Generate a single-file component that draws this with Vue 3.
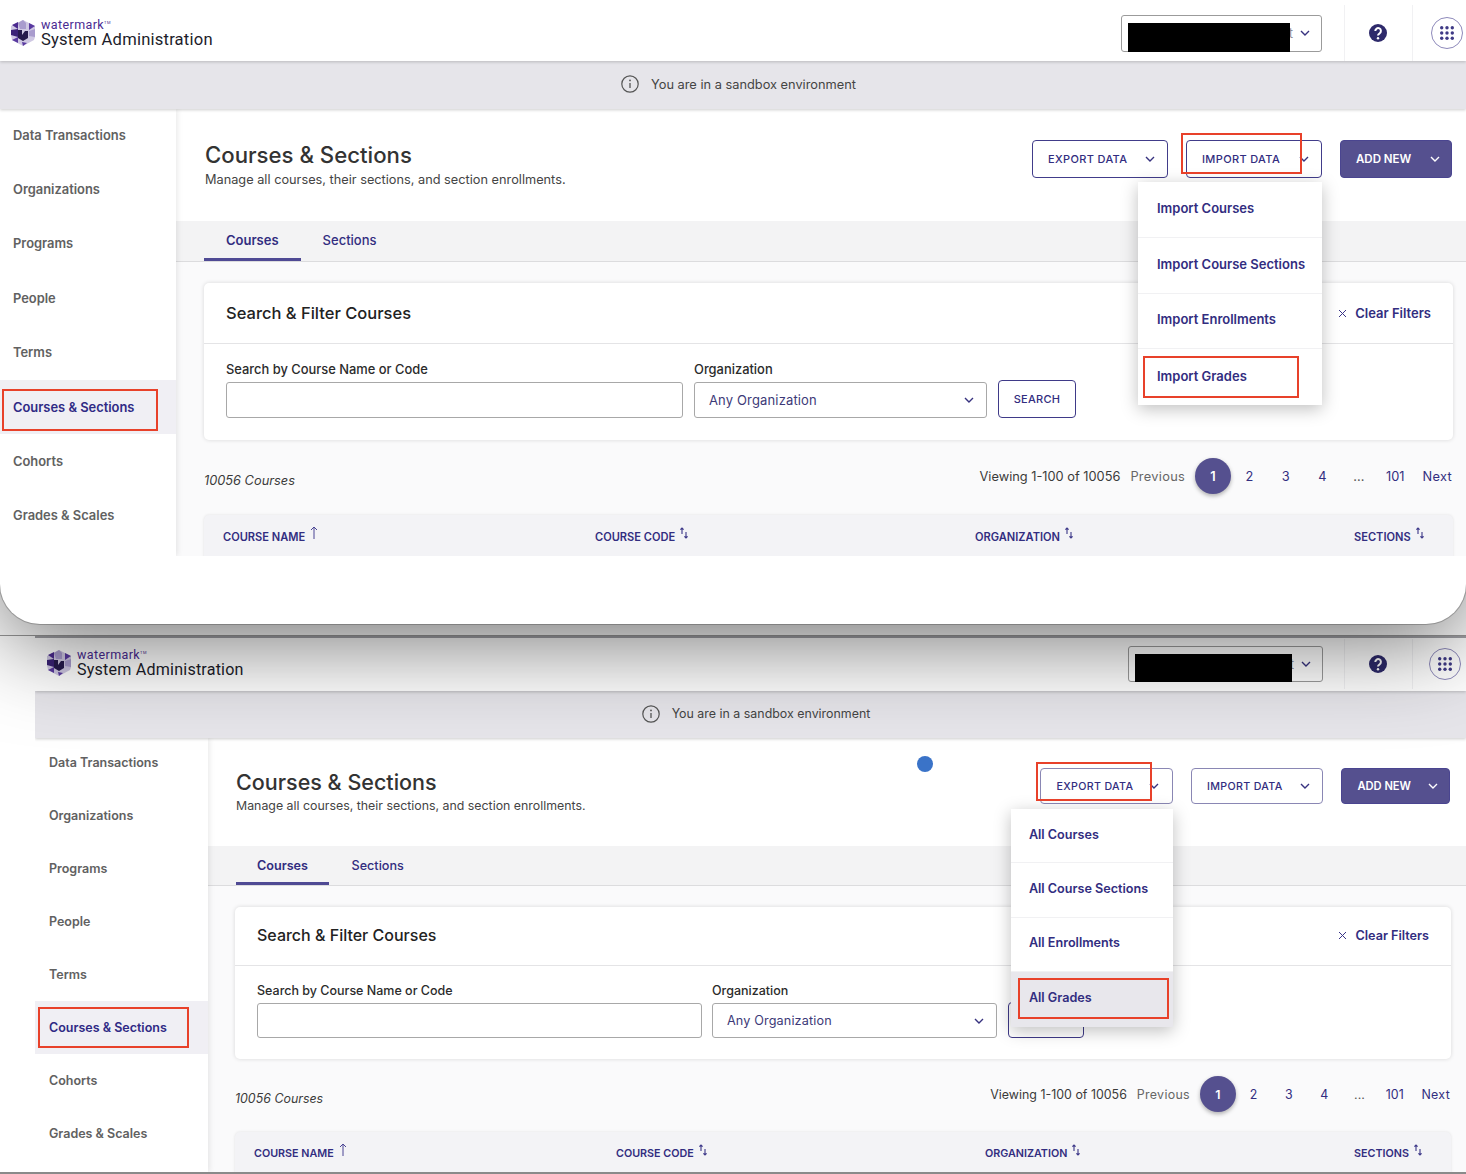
<script setup>
// Two captures of the same page, stacked. Only the open menu and some sizes differ.
const navItems = ['Data Transactions', 'Organizations', 'Programs', 'People', 'Terms', 'Courses & Sections', 'Cohorts', 'Grades & Scales'];
const pages = ['2', '3', '4', '...', '101'];
const columns = ['COURSE NAME', 'COURSE CODE', 'ORGANIZATION', 'SECTIONS'];

const shots = [
  {
    id: 'top',
    openButton: 'IMPORT DATA',
    menu: ['Import Courses', 'Import Course Sections', 'Import Enrollments', 'Import Grades'],
    cursor: false
  },
  {
    id: 'bottom',
    openButton: 'EXPORT DATA',
    menu: ['All Courses', 'All Course Sections', 'All Enrollments', 'All Grades'],
    cursor: true
  }
];
</script>

<template>
  <div class="page">
    <div v-for="shot in shots" :key="shot.id" class="frame" :class="shot.id">
      <div class="shot">
        <header class="topbar">
          <div class="brand">
            <svg class="logo" viewBox="0 0 24 26">
              <polygon points="12,0 18,3 24,6 24,17 23,20 12,26 1,20 0,15 0,6" fill="#cfc8e3" />
              <polygon points="7,3 12,0 15,3 15,9 9,9" fill="#a99cce" />
              <polygon points="1,5 7,2 7,9" fill="#4b2a8f" />
              <polygon points="0,10 7,9 7,17 0,15" fill="#3a2277" />
              <polygon points="18,3 24,6 18,10" fill="#5a3aa0" />
              <polygon points="18,11 24,9 24,17 18,16" fill="#a99cce" />
              <polygon points="1,20 7,17 7,23" fill="#5a3aa0" />
              <polygon points="11,22 16,23 12,26" fill="#5a3aa0" />
              <polygon points="7,10 11,10 11,15 14,11 17,11 17,18 12,21 7,18" fill="#261a4d" />
            </svg>
            <div class="brand-text">
              <span class="wordmark">watermark<sup>TM</sup></span>
              <span class="product">System Administration</span>
            </div>
          </div>
          <div class="account">
            <span class="account-name">t</span>
            <svg class="chev" viewBox="0 0 10 6"><path d="M1 1l4 4 4-4" /></svg>
            <div class="redact"></div>
          </div>
          <div class="bar-cell help">
            <svg width="18" height="18" viewBox="0 0 18 18">
              <circle cx="9" cy="9" r="9" fill="#2e2a6b" />
              <path d="M6.3 7a2.8 2.8 0 1 1 4.3 2.3c-1 .6-1.6 1.1-1.6 2.3" fill="none" stroke="#fff" stroke-width="2" />
              <circle cx="9" cy="14.2" r="1.2" fill="#fff" />
            </svg>
          </div>
          <div class="bar-cell apps">
            <div class="apps-ring">
              <svg width="14" height="14" viewBox="0 0 14 14" fill="#3f3a86">
                <template v-for="y in [1.7, 7, 12.3]" :key="y">
                  <circle v-for="x in [1.7, 7, 12.3]" :key="x" :cx="x" :cy="y" r="1.7" />
                </template>
              </svg>
            </div>
          </div>
        </header>

        <div class="notice">
          <svg width="18" height="18" viewBox="0 0 18 18">
            <circle cx="9" cy="9" r="8.2" fill="none" stroke="#555" stroke-width="1.2" />
            <path d="M9 8v5" stroke="#555" stroke-width="1.3" />
            <circle cx="9" cy="5.4" r=".9" fill="#555" />
          </svg>
          <span>You are in a sandbox environment</span>
        </div>

        <div class="body">
          <nav class="side">
            <div v-for="item in navItems" :key="item" class="nav-item" :class="{ active: item === 'Courses & Sections' }">
              {{ item }}
              <div v-if="item === 'Courses & Sections'" class="mark mark-nav"></div>
            </div>
          </nav>

          <main class="main">
            <div v-if="shot.cursor" class="cursor"></div>
            <div class="head">
              <div class="head-text">
                <h1>Courses &amp; Sections</h1>
                <p>Manage all courses, their sections, and section enrollments.</p>
              </div>
              <div class="actions">
                <div v-for="label in ['EXPORT DATA', 'IMPORT DATA', 'ADD NEW']" :key="label" class="action" :class="{ primary: label === 'ADD NEW' }">
                  <span>{{ label }}</span>
                  <svg class="chev" viewBox="0 0 10 6"><path d="M1 1l4 4 4-4" /></svg>
                  <template v-if="label === shot.openButton">
                    <div class="mark mark-button"></div>
                    <div class="menu">
                      <div v-for="(entry, i) in shot.menu" :key="entry" class="menu-item" :class="{ last: i === 3 }">
                        {{ entry }}
                        <div v-if="i === 3" class="mark mark-menu"></div>
                      </div>
                    </div>
                  </template>
                </div>
              </div>
            </div>

            <div class="tabs">
              <div class="tab current">Courses</div>
              <div class="tab">Sections</div>
            </div>

            <div class="content">
              <section class="card">
                <div class="card-head">
                  <h2>Search &amp; Filter Courses</h2>
                  <div class="clear">
                    <svg width="9" height="9" viewBox="0 0 9 9"><path d="M1 1l7 7M8 1l-7 7" stroke="#3a3587" fill="none" /></svg>
                    <span>Clear Filters</span>
                  </div>
                </div>
                <div class="filters">
                  <div class="field field-name">
                    <label>Search by Course Name or Code</label>
                    <div class="input"></div>
                  </div>
                  <div class="field field-org">
                    <label>Organization</label>
                    <div class="input select">
                      <span>Any Organization</span>
                      <svg class="chev" viewBox="0 0 10 6"><path d="M1 1l4 4 4-4" /></svg>
                    </div>
                  </div>
                  <div class="search">SEARCH</div>
                </div>
              </section>

              <div class="results">
                <span class="count">10056 Courses</span>
                <div class="pager">
                  <span class="viewing">Viewing 1-100 of 10056</span>
                  <span class="prev">Previous</span>
                  <span class="page-current">1</span>
                  <span v-for="p in pages" :key="p" class="page-cell" :class="{ dots: p === '...' }">{{ p }}</span>
                  <span class="next">Next</span>
                </div>
              </div>

              <div class="table-head">
                <div v-for="(col, i) in columns" :key="col" class="col">
                  <span>{{ col }}</span>
                  <svg v-if="i === 0" class="sort-up" width="8" height="13" viewBox="0 0 8 13">
                    <path d="M4 13V1M1 4l3-3 3 3" fill="none" stroke="#4a4594" />
                  </svg>
                  <svg v-else class="sort-both" width="8" height="12" viewBox="0 0 8 12">
                    <path d="M2 7V1M.4 2.6L2 1l1.6 1.6M6 5v6M4.4 9.4L6 11l1.6-1.6" fill="none" stroke="#3a3587" stroke-width="1.1" />
                  </svg>
                </div>
              </div>
            </div>
          </main>
        </div>
      </div>
    </div>
  </div>
</template>

<style>
body {
  margin: 0;
  background: #fff;
}
</style>

<style scoped>
.page {
  width: 1466px;
  height: 1174px;
  overflow: hidden;
  background: #fff;
  font-family: Inter, "Liberation Sans", sans-serif;
  color: #333;
}

/* sizes of each capture */
.top {
  --k: 1;
  --bar-h: 61px;
  --bar-pad: 5px;
  --notice-h: 48px;
  --side-w: 176px;
  --nav-h: 54.4px;
  --nav-off: -1px;
  --nav-pad: 13px;
  --main-pad: 28px;
  --main-right: 13px;
  --head-h: 112px;
  --head-top: 31px;
  --btn-h: 38px;
  --btn-w: 136px;
  --tabs-h: 41px;
  --card-head: 61px;
  --filter-top: 18px;
  --filter-bottom: 22px;
  --filter-gap: 11px;
  --field-h: 36px;
  --search-h: 38px;
  --name-w: 457px;
  --org-w: 293px;
  --search-w: 78px;
  --cell: 36.5px;
  --table-cols: 372px 380px 379px 1fr;
  --results-h: 75px;
  --results-top: 18px;
  --brand-left: 11px;
  --apps-pad: 18px;
  --select-gap: 22px;
  --account-h: 37px;
  --menu-w: 184px;
  --menu-pad: 19px;
  position: relative;
  z-index: 2;
  height: 624px;
  background: #fff;
  border-radius: 0 0 40px 40px;
  box-shadow: 0 0 0 1px rgba(0, 0, 0, 0.22), 0 18px 90px rgba(0, 0, 0, 0.55);
  overflow: hidden;
}
.top .shot {
  height: 556px;
}
.top .head {
  padding-left: calc(var(--main-pad) + 1px);
}
.top .head-text p {
  margin-top: 1px;
}
.top .tab {
  padding-bottom: 2px;
}
.bottom {
  --k: 0.97;
  --bar-h: 55px;
  --bar-pad: 1px;
  --notice-h: 47px;
  --side-w: 173px;
  --nav-h: 53px;
  --nav-off: -2.5px;
  --nav-pad: 14px;
  --main-pad: 27px;
  --main-right: 15px;
  --head-h: 108px;
  --head-top: 30px;
  --btn-h: 36px;
  --btn-w: 132.5px;
  --tabs-h: 40px;
  --card-head: 59px;
  --filter-top: 17px;
  --filter-bottom: 21px;
  --filter-gap: 10px;
  --field-h: 35px;
  --search-h: 36px;
  --name-w: 445px;
  --org-w: 285px;
  --search-w: 76px;
  --cell: 35.3px;
  --table-cols: 362px 369px 369px 1fr;
  --results-h: 73px;
  --results-top: 17px;
  --brand-left: 12px;
  --apps-pad: 16px;
  --select-gap: 21px;
  --account-h: 36px;
  --menu-w: 162px;
  --menu-pad: 18px;
  position: relative;
  z-index: 1;
  margin-top: 11px;
  height: 539px;
  box-sizing: border-box;
  border-top: 1px solid #9a9a9a;
  border-bottom: 2px solid #8a8a8a;
  padding-left: 35px;
}
.bottom .shot {
  height: 100%;
}
.bottom .topbar {
  border-top: 2px solid #a3a3a8;
  padding-bottom: 2px;
}
.bottom .brand {
  margin-top: -2px;
}
.bottom .head {
  padding-left: calc(var(--main-pad) + 1px);
}
.bottom .head-text {
  margin-top: -1px;
}
.bottom .tabs {
  padding-left: calc(var(--main-pad) + 1px);
}
.bottom .tab {
  padding: 0 21px;
}
.bottom .tab + .tab {
  margin-left: 1.5px;
}
.bottom .card-head {
  padding-bottom: 2px;
}
.bottom .search {
  margin-left: 1px;
}

.shot {
  display: flex;
  flex-direction: column;
  overflow: hidden;
  position: relative;
}

/* top bar */
.topbar {
  box-sizing: border-box;
  height: var(--bar-h);
  flex: none;
  display: flex;
  align-items: center;
  background: #fff;
  padding-left: var(--brand-left);
  padding-top: var(--bar-pad);
  position: relative;
  z-index: 4;
  box-shadow: 0 1px 3px rgba(0, 0, 0, 0.2);
}
.brand {
  display: flex;
  align-items: center;
  gap: 6px;
  margin-right: auto;
}
.logo {
  width: 24px;
  height: 26px;
}
.brand-text {
  display: flex;
  flex-direction: column;
}
.wordmark {
  font-family: Roboto, sans-serif;
  font-size: 12.5px;
  line-height: 13px;
  letter-spacing: 0.4px;
  color: #4a2a92;
}
.wordmark sup {
  font-size: 4px;
  line-height: 0;
  vertical-align: 5px;
}
.product {
  font-family: Roboto, sans-serif;
  font-size: calc(var(--k) * 16.6px);
  line-height: 17px;
  letter-spacing: 0.2px;
  color: #1c1c2a;
}
.account {
  position: relative;
  box-sizing: border-box;
  width: calc(var(--k) * 201px);
  height: var(--account-h);
  display: flex;
  align-items: center;
  justify-content: flex-end;
  gap: 7px;
  padding-right: 11px;
  border: 1px solid #9b9b9b;
  border-radius: 3px;
  margin-right: var(--select-gap);
}
.account-name {
  font-size: 13px;
  color: #8d8d99;
}
.redact {
  position: absolute;
  left: 6px;
  top: 7px;
  bottom: -1px;
  width: calc(var(--k) * 162px);
  background: #000;
}
.bar-cell {
  box-sizing: border-box;
  height: 100%;
  display: flex;
  align-items: center;
  border-left: 1px solid #f1f1f3;
}
.help {
  width: 68px;
  justify-content: center;
  padding-right: 1px;
}
.apps {
  width: 54px;
  padding-left: var(--apps-pad);
}
.apps-ring {
  box-sizing: border-box;
  width: 32px;
  height: 32px;
  flex: none;
  border: 1px solid #8e8abb;
  border-radius: 50%;
  display: flex;
  align-items: center;
  justify-content: center;
}
.chev {
  width: 10px;
  height: 6px;
  flex: none;
  fill: none;
  stroke: #37327f;
  stroke-width: 1.4;
}

/* sandbox notice */
.notice {
  box-sizing: border-box;
  height: var(--notice-h);
  flex: none;
  display: flex;
  align-items: center;
  justify-content: center;
  gap: 12px;
  padding-left: 11px;
  padding-bottom: 2px;
  background: #e6e5ea;
  font-size: calc(var(--k) * 12.8px);
  color: #444;
  position: relative;
  z-index: 3;
  box-shadow: 0 1px 3px rgba(0, 0, 0, 0.2);
}

/* layout */
.body {
  flex: 1;
  min-height: 0;
  display: flex;
}
.side {
  width: var(--side-w);
  flex: none;
  background: #fff;
  position: relative;
  z-index: 2;
  box-shadow: 1px 0 6px rgba(0, 0, 0, 0.1);
}
.nav-item {
  position: relative;
  height: var(--nav-h);
  display: flex;
  align-items: center;
  padding-left: var(--nav-pad);
  font-size: calc(var(--k) * 12.9px);
  font-weight: 600;
  color: #616161;
}
.nav-item:first-child {
  margin-top: var(--nav-off);
}
.nav-item.active {
  background: #f0eff4;
  color: #2f2a85;
}
.main {
  flex: 1;
  min-width: 0;
  position: relative;
  background: #fafafb;
}
.cursor {
  position: absolute;
  left: 709px;
  top: 18px;
  width: 16px;
  height: 16px;
  border-radius: 50%;
  background: #3a73c8;
  z-index: 6;
}

/* heading */
.head {
  box-sizing: border-box;
  height: var(--head-h);
  display: flex;
  justify-content: space-between;
  align-items: flex-start;
  padding: var(--head-top) calc(var(--main-right) + 1px) 0 var(--main-pad);
  background: #fff;
}
.head-text h1 {
  margin: 0;
  font-size: calc(var(--k) * 22.2px);
  line-height: 30px;
  font-weight: 500;
  color: #333;
}
.head-text p {
  margin: 0;
  font-size: calc(var(--k) * 12.75px);
  line-height: 18px;
  color: #444;
}
.actions {
  display: flex;
  gap: 18px;
}
.action {
  position: relative;
  box-sizing: border-box;
  width: var(--btn-w);
  height: var(--btn-h);
  display: flex;
  align-items: center;
  justify-content: space-between;
  padding: 0 12.5px 0 15px;
  border: 1px solid #413c8a;
  border-radius: 4px;
  background: #fff;
  font-size: calc(var(--k) * 11px);
  font-weight: 500;
  letter-spacing: 0.35px;
  color: #322d80;
}
.bottom .action {
  border-color: #8a87b4;
}
.action.primary,
.bottom .action.primary {
  width: calc(var(--k) * 112px);
  padding-right: 11px;
  background: #55508f;
  border-color: #4a4590;
  color: #fff;
  font-size: calc(var(--k) * 11.5px);
  font-weight: 600;
  letter-spacing: 0;
}
.primary .chev {
  stroke: #fff;
}
.menu {
  position: absolute;
  right: -1px;
  top: calc(100% + 5px);
  width: var(--menu-w);
  background: #fff;
  box-shadow: 0 4px 16px rgba(0, 0, 0, 0.25);
  z-index: 5;
  letter-spacing: 0;
}
.bottom .menu {
  top: calc(100% + 6px);
}
.menu-item {
  position: relative;
  box-sizing: border-box;
  height: calc(var(--nav-h) + 1.4px);
  display: flex;
  align-items: center;
  padding-left: var(--menu-pad);
  padding-bottom: 3px;
  font-size: calc(var(--k) * 13px);
  font-weight: 600;
  color: #322d80;
  border-bottom: 1px solid #f1f1f3;
}
.menu-item.last {
  border-bottom: 0;
}
.bottom .menu-item.last {
  background: #e8e7ec;
}

/* tabs */
.tabs {
  box-sizing: border-box;
  height: var(--tabs-h);
  display: flex;
  padding-left: var(--main-pad);
  background: #f3f3f4;
  border-bottom: 1px solid #dcdcde;
}
.tab {
  padding: 0 22px;
  display: flex;
  align-items: center;
  font-size: calc(var(--k) * 13px);
  font-weight: 500;
  color: #322d80;
}
.tab.current {
  font-weight: 600;
  box-shadow: inset 0 -3px 0 #4f4a94;
}

/* filter card */
.content {
  padding: 21px var(--main-right) 0 var(--main-pad);
}
.card {
  background: #fff;
  border-radius: 5px;
  box-shadow: 0 0 4px rgba(0, 0, 0, 0.14);
}
.card-head {
  box-sizing: border-box;
  height: var(--card-head);
  display: flex;
  align-items: center;
  justify-content: space-between;
  padding: 0 22px;
  border-bottom: 1px solid #e4e4e6;
}
.card-head h2 {
  margin: 0;
  font-size: calc(var(--k) * 16.5px);
  font-weight: 500;
  color: #222;
}
.clear {
  display: flex;
  align-items: center;
  gap: 8px;
  font-size: calc(var(--k) * 13px);
  font-weight: 600;
  color: #322d80;
}
.filters {
  display: flex;
  align-items: flex-end;
  gap: var(--filter-gap);
  padding: var(--filter-top) 22px var(--filter-bottom);
}
.field label {
  display: block;
  font-size: calc(var(--k) * 12.9px);
  line-height: 16px;
  font-weight: 500;
  color: #2b2b2b;
  margin-bottom: 4px;
}
.field-name {
  width: var(--name-w);
}
.field-org {
  width: var(--org-w);
}
.input {
  box-sizing: border-box;
  height: var(--field-h);
  border: 1px solid #a8a8a8;
  border-radius: 3px;
  background: #fff;
}
.select {
  display: flex;
  align-items: center;
  justify-content: space-between;
  padding: 0 12px 0 14px;
  font-size: calc(var(--k) * 13px);
  letter-spacing: 0.15px;
  color: #3d3a78;
}
.search {
  box-sizing: border-box;
  width: var(--search-w);
  height: var(--search-h);
  display: flex;
  align-items: center;
  justify-content: center;
  border: 1px solid #3f3a88;
  border-radius: 4px;
  font-size: calc(var(--k) * 11px);
  font-weight: 500;
  letter-spacing: 0.3px;
  color: #322d80;
}

/* results line */
.results {
  box-sizing: border-box;
  height: var(--results-h);
  display: flex;
  justify-content: space-between;
  align-items: flex-start;
  padding-top: var(--results-top);
  padding-right: 1px;
}
.count {
  margin-top: 15px;
  font-size: calc(var(--k) * 12.8px);
  font-style: italic;
  color: #3a3a3a;
}
.pager {
  display: flex;
  align-items: center;
  height: 36px;
  font-size: calc(var(--k) * 12.8px);
}
.viewing {
  color: #3a3a3a;
  margin-right: 10px;
}
.prev {
  color: #666;
  letter-spacing: 0.3px;
  margin-right: 10px;
}
.page-current {
  width: 36px;
  height: 36px;
  border-radius: 50%;
  background: #55508f;
  color: #fff;
  font-weight: 600;
  display: flex;
  align-items: center;
  justify-content: center;
  box-shadow: 0 2px 4px rgba(0, 0, 0, 0.3);
}
.page-cell {
  width: var(--cell);
  text-align: center;
  color: #322d80;
}
.page-cell.dots {
  color: #555;
}
.next {
  margin-left: 9px;
  color: #322d80;
  letter-spacing: 0.3px;
}

/* table header */
.table-head {
  height: 60px;
  display: grid;
  grid-template-columns: var(--table-cols);
  padding-left: 19px;
  padding-top: 13px;
  box-sizing: border-box;
  background: #f3f3f6;
  border-radius: 5px 5px 0 0;
  box-shadow: 0 0 3px rgba(0, 0, 0, 0.1);
}
.col {
  display: flex;
  align-items: flex-start;
  gap: 5px;
  font-size: calc(var(--k) * 11.1px);
  line-height: 18px;
  font-weight: 600;
  color: #322d80;
}
.sort-up {
  margin-top: -2px;
}
.sort-both {
  margin-top: -1px;
}

/* red review marks drawn over the capture */
.mark {
  position: absolute;
  box-sizing: border-box;
  border: 2px solid #e8412a;
  pointer-events: none;
  z-index: 6;
}
.top .mark-nav {
  left: 2px;
  top: 9px;
  width: 156px;
  height: 42px;
}
.bottom .mark-nav {
  left: 3px;
  top: 6px;
  width: 151px;
  height: 41px;
}
.top .mark-button {
  left: -6px;
  top: -8px;
  width: 121px;
  height: 41px;
}
.bottom .mark-button {
  left: -5px;
  top: -7px;
  width: 116px;
  height: 39px;
}
.top .mark-menu {
  left: 5px;
  top: 7px;
  width: 156px;
  height: 42px;
}
.bottom .mark-menu {
  left: 7px;
  top: 6px;
  width: 151px;
  height: 41px;
}
</style>
